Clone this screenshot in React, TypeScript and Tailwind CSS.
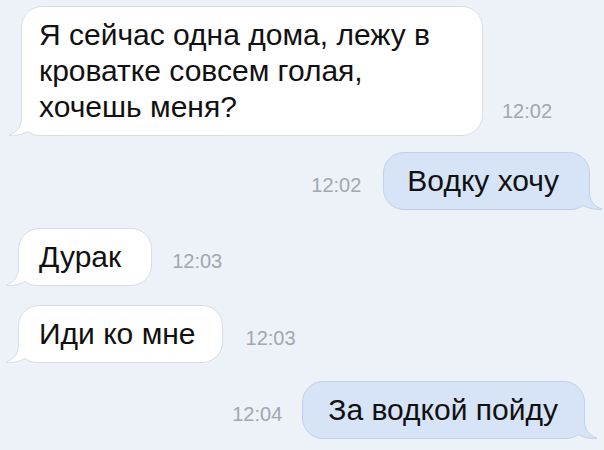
import type { ReactNode } from "react";

type Side = "in" | "out";

// iOS-style bubble tail, drawn over the bottom corner of the bubble
function Tail({ side }: { side: Side }) {
  const fill = side === "in" ? "#ffffff" : "#d7e3f6";
  const stroke = side === "in" ? "#d9dde5" : "#c3d1e8";
  return (
    <svg
      width="34"
      height="34"
      viewBox="0 0 34 34"
      className={`absolute bottom-[-1px] ${
        side === "in" ? "left-[-15px]" : "right-[-15px] -scale-x-100"
      }`}
    >
      <path
        d="M14.5 0 L14.5 16 C14.5 25 10 30 2 33.2 C9 34 15 32.5 21 29.5 C25 32.5 29 33.5 34 33.5 L34 0 Z"
        fill={fill}
      />
      <path
        d="M14.5 0 L14.5 16 C14.5 25 10 30 2 33.2 C9 34 15 32.5 21 29.5 C25 32.5 29 33.5 34 33.5"
        fill="none"
        stroke={stroke}
        strokeWidth="1"
      />
    </svg>
  );
}

function Bubble({
  side,
  className = "",
  children,
}: {
  side: Side;
  className?: string;
  children: ReactNode;
}) {
  return (
    <div
      className={`relative rounded-[21px] border py-[10px] text-[30px] leading-[36px] text-[#111] ${
        side === "in"
          ? "bg-white border-[#d9dde5]"
          : "bg-[#d7e3f6] border-[#c3d1e8]"
      } ${className}`}
    >
      <Tail side={side} />
      <span className="relative">{children}</span>
    </div>
  );
}

function Time({ children, className = "" }: { children: ReactNode; className?: string }) {
  return (
    <span
      className={`mb-[15px] text-[20px] leading-[20px] text-[#a2a7b0] ${className}`}
    >
      {children}
    </span>
  );
}

export default function App() {
  return (
    <div
      className="flex h-[450px] w-[604px] flex-col overflow-hidden bg-[#edf1f8]"
      style={{ fontFamily: '"Liberation Sans", Arial, sans-serif' }}
    >
      <div className="mt-[6px] flex items-end pl-[21px]">
        <Bubble side="in" className="w-[462px] pl-[17px]">
          Я сейчас одна дома, лежу в<br />
          кроватке совсем голая,<br />
          хочешь меня?
        </Bubble>
        <Time className="ml-[19px]">12:02</Time>
      </div>

      <div className="mt-[16px] flex items-end justify-end pr-[14px]">
        <Time className="mr-[22px]">12:02</Time>
        <Bubble side="out" className="pl-[23px] pr-[30px]">
          Водку хочу
        </Bubble>
      </div>

      <div className="mt-[18px] flex items-end pl-[18px]">
        <Bubble side="in" className="pl-[20px] pr-[30px]">
          Дурак
        </Bubble>
        <Time className="ml-[20px]">12:03</Time>
      </div>

      <div className="mt-[19px] flex items-end pl-[18px]">
        <Bubble side="in" className="pl-[20px] pr-[26px]">
          Иди ко мне
        </Bubble>
        <Time className="ml-[23px]">12:03</Time>
      </div>

      <div className="mt-[18px] flex items-end justify-end pr-[19px]">
        <Time className="mr-[20px]">12:04</Time>
        <Bubble side="out" className="pl-[25px] pr-[26px]">
          За водкой пойду
        </Bubble>
      </div>
    </div>
  );
}
